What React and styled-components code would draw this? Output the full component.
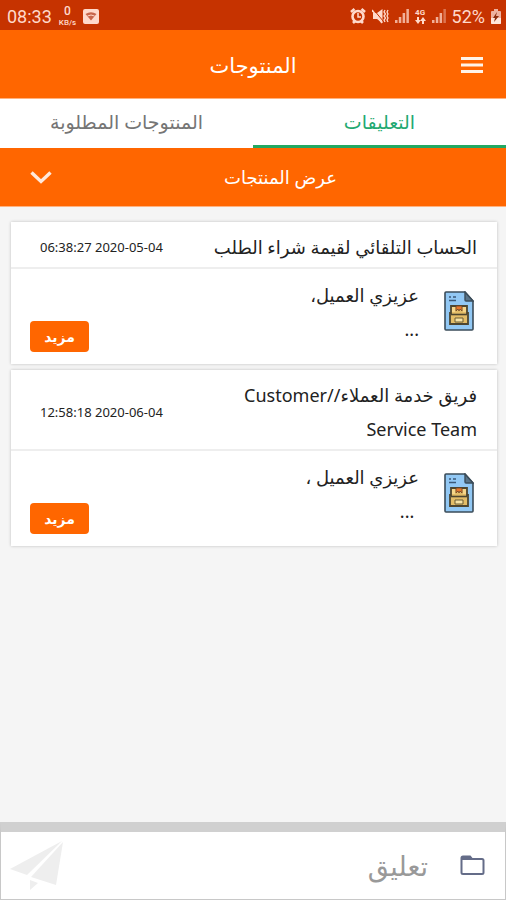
import React, { useState } from 'react';
import styled, { createGlobalStyle } from 'styled-components';

const GlobalStyle = createGlobalStyle`
  * {
    box-sizing: border-box;
  }
  body {
    margin: 0;
    background: #f5f5f5;
    color: #222;
    font-family: 'Noto Sans', 'DejaVu Sans', sans-serif;
  }
  button, input {
    font-family: inherit;
    border: none;
    padding: 0;
  }
  button {
    cursor: pointer;
  }
  svg {
    display: block;
    flex: none;
  }
`;

const Screen = styled.div`
  min-height: 100vh;
  display: flex;
  flex-direction: column;
`;

const StatusBar = styled.div`
  direction: ltr;
  display: flex;
  justify-content: space-between;
  align-items: center;
  height: 30px;
  padding: 2px 5px 0 7px;
  background: #c63300;
  color: #ffd9cb;
  font-family: Roboto, sans-serif;
  font-size: 18px;
`;

const StatusGroup = styled.div`
  display: flex;
  align-items: center;
  gap: ${props => props.$gap}px;
`;

const Speed = styled.div`
  display: flex;
  flex-direction: column;
  align-items: center;
  font-size: 12px;
  line-height: 14px;
  font-weight: 500;

  small {
    font-size: 8px;
    line-height: 10px;
  }
`;

const Network = styled(Speed)`
  font-size: 8px;
  line-height: 8px;
  font-weight: 700;
`;

const Header = styled.header`
  display: grid;
  grid-template-columns: 48px 1fr 48px;
  align-items: center;
  height: 69px;
  padding: 2px 10px 0;
  background: #ff6600;
  border-bottom: 1px solid #ffb27f;
  color: #fff;

  h1 {
    margin: 0;
    text-align: center;
    font-size: 21px;
    line-height: 30px;
    font-weight: 400;
  }
`;

const IconButton = styled.button`
  display: flex;
  align-items: center;
  justify-content: center;
  background: none;
`;

const Tabs = styled.nav`
  display: flex;
  height: 49px;
  background: #fff;
`;

const Tab = styled.button`
  flex: 1;
  background: none;
  border-bottom: 3px solid ${props => (props.$active ? '#22a962' : 'transparent')};
  color: ${props => (props.$active ? '#1fa971' : '#757575')};
  font-size: 19px;
`;

const Filter = styled.button`
  display: grid;
  grid-template-columns: 1fr 48px;
  align-items: center;
  justify-items: center;
  width: 100%;
  height: 59px;
  padding: 0 10px 0 17px;
  background: #ff6600;
  border-bottom: 1px solid #ffb27f;
  color: #fff;
  font-size: 18px;
`;

const List = styled.main`
  flex: 1;
  display: flex;
  flex-direction: column;
  gap: 6px;
  padding: 15px 9px 15px 11px;
`;

const Card = styled.article`
  background: #fff;
  box-shadow: 0 0 3px rgba(0, 0, 0, 0.22);
`;

const CardHeader = styled.div`
  display: flex;
  align-items: center;
  justify-content: space-between;
  padding: 8px 20px 3px 29px;
  border-bottom: 2px solid #eee;

  h2 {
    flex: 1;
    max-width: 272px;
    margin: 0;
    font-size: 18px;
    line-height: 34px;
    font-weight: 400;
  }

  time {
    direction: ltr;
    font-size: 13px;
    white-space: nowrap;
  }
`;

const CardBody = styled.div`
  display: flex;
  height: 95px;
  padding: 9px 21px 12px 19px;

  svg {
    margin: 13px 2px 0 25px;
  }
`;

const Message = styled.p`
  flex: 1;
  margin: 0;
  font-size: 18px;
  line-height: 34px;
  white-space: pre-wrap;
`;

const MoreButton = styled.button`
  align-self: flex-end;
  width: 59px;
  height: 31px;
  border-radius: 4px;
  background: #ff6600;
  color: #fff;
  font-size: 14px;
  font-weight: 700;
`;

const Composer = styled.form`
  display: flex;
  align-items: center;
  gap: 32px;
  height: 78px;
  padding: 0 20px 0 9px;
  border: 1px solid #c8c8c8;
  border-top: 10px solid #d0d0d0;
  background: #fff;

  input {
    flex: 1;
    min-width: 0;
    height: 48px;
    outline: none;
    background: none;
    color: #333;
    font-size: 27px;
  }

  input::placeholder {
    color: #999;
    opacity: 1;
  }
`;

const SavedIcon = () => (
  <svg width="16" height="15" viewBox="0 0 16 15">
    <rect width="16" height="15" rx="2" fill="#ffd9cb" />
    <path d="M2.500 5q5.500-3.500 11 0L8 11.500z" fill="#c8654a" />
    <path d="M4.500 7q3.500-2 7 0" fill="none" stroke="#ffd9cb" />
  </svg>
);

const AlarmIcon = () => (
  <svg width="16" height="16" viewBox="0 0 16 16" fill="none" stroke="#ffd9cb" strokeWidth="2.6">
    <circle cx="8" cy="8.5" r="5.500" />
    <path d="M1 4l3.500-3M15 4l-3.500-3M3 15l2-2M13 15l-2-2" />
    <path d="M8 5v4h3" strokeWidth="1.500" />
  </svg>
);

const MuteIcon = () => (
  <svg width="17" height="16" viewBox="0 0 17 16" fill="none" stroke="#ffd9cb">
    <path d="M1 5h4l5.500-4v14L5 11H1z" fill="#ffd9cb" stroke="none" />
    <path d="M1.500 1.500l10 12" stroke="#c63300" />
    <path d="M0 2l10 13" strokeWidth="1.500" />
    <path d="M13 2l-1 2 1.500 2L12 8l1.500 2-1.500 2 1 2M16 2l-1 2 1 2-1 2 1 2-1 2 1 2" strokeWidth="1.300" />
  </svg>
);

const SignalIcon = ({ level }) => (
  <svg width="14" height="14" viewBox="0 0 14 14" fill="#ffd9cb">
    {[3, 6, 10, 14].map((h, i) => (
      <rect key={h} x={i * 3.8} y={14 - h} width="2.5" height={h} opacity={i < level ? 0.75 : 0.4} />
    ))}
  </svg>
);

const ArrowsIcon = () => (
  <svg width="11" height="7" viewBox="0 0 11 7" fill="#ffd9cb">
    <path d="M2 0h2v3h2L3 7 0 3h2zM7 7h2V4h2L8 0 5 4h2z" />
  </svg>
);

const BatteryIcon = () => (
  <svg width="10" height="15" viewBox="0 0 10 15">
    <path d="M3 0h4v2h2q1 0 1 1v11q0 1-1 1H1q-1 0-1-1V3q0-1 1-1h2z" fill="#eeb29f" />
    <path d="M0 9h10v5q0 1-1 1H1q-1 0-1-1z" fill="#ffe6dc" />
    <path d="M6 3L2 9h2l-1 4 5-6H5z" fill="#8b2c0c" />
  </svg>
);

const MenuIcon = () => (
  <svg width="22" height="16" viewBox="0 0 22 16" fill="#fff3e8">
    <path d="M0 0h22v3H0zM0 6.500h22v3H0zM0 13h22v3H0z" />
  </svg>
);

const ChevronIcon = () => (
  <svg width="22" height="13" viewBox="0 0 22 13" fill="none" stroke="#ffe9dc" strokeWidth="3.400">
    <path d="M1.500 1.500L11 10.500l9.500-9" />
  </svg>
);

const DocumentIcon = () => (
  <svg width="30" height="40" viewBox="0 0 30 40">
    <path d="M2 1h19l8 9v28q0 1-1 1H2q-1 0-1-1V2q0-1 1-1z" fill="#92c8f4" stroke="#3b4c59" strokeWidth="1.600" />
    <path d="M21 1v8q0 1 1 1h7z" fill="#5a7488" stroke="#3b4c59" strokeWidth="1.400" />
    <path d="M5 6h2M9 6h3M5 9.500h7" stroke="#3c5878" strokeWidth="1.600" />
    <path d="M7 15h16v7h1v11H6V22h1z" fill="#e3bd68" stroke="#4e4630" strokeWidth="1.800" />
    <path d="M8 16h3v5H8zM19 16h3v5h-3z" fill="#f6d68a" />
    <path d="M12 15v5l2-2 1 2 1-2 2 2v-5z" fill="#e8772d" stroke="#6b4527" strokeWidth=".8" />
    <path d="M7 23.500h16" stroke="#4e4630" strokeWidth="1.600" />
    <path d="M11 27h8v4h-8z" fill="#f8e3a4" stroke="#6b5c34" />
  </svg>
);

const FolderIcon = () => (
  <svg width="25" height="21" viewBox="0 0 25 21" fill="none" stroke="#646c88" strokeWidth="2">
    <path d="M2.500 4H22q1.500 0 1.500 1.500v12q0 1.500-1.500 1.500H3q-1.500 0-1.500-1.500V3Q1.500 1.500 3 1.500h7L12 4z" />
    <path d="M2 3h9" strokeWidth="3" />
  </svg>
);

const SendIcon = () => (
  <svg width="54" height="50" viewBox="0 0 54 50" fill="#eee">
    <path d="M0 28L52 0 17 34z" />
    <path d="M53 1L46 44 21 36z" />
    <path d="M20 39l8 3-8 7z" />
  </svg>
);

const comments = [
  {
    id: 1,
    title: 'الحساب التلقائي لقيمة شراء الطلب',
    date: '06:38:27 2020-05-04',
    text: 'عزيزي العميل،\n...',
  },
  {
    id: 2,
    title: 'فريق خدمة العملاء//Customer Service Team',
    date: '12:58:18 2020-06-04',
    text: 'عزيزي العميل ،\n ...',
  },
];

const tabs = ['التعليقات', 'المنتوجات المطلوبة'];

const Comment = ({ title, date, text }) => (
  <Card>
    <CardHeader>
      <h2>{title}</h2>
      <time>{date}</time>
    </CardHeader>
    <CardBody>
      <DocumentIcon />
      <Message>{text}</Message>
      <MoreButton type="button">مزيد</MoreButton>
    </CardBody>
  </Card>
);

const App = () => {
  const [active, setActive] = useState(0);

  return (
    <Screen dir="rtl" lang="ar">
      <GlobalStyle />
      <StatusBar>
        <StatusGroup $gap={7}>
          <span>08:33</span>
          <Speed>
            <span>0</span>
            <small>KB/s</small>
          </Speed>
          <SavedIcon />
        </StatusGroup>
        <StatusGroup $gap={6}>
          <AlarmIcon />
          <MuteIcon />
          <SignalIcon level={4} />
          <Network>
            4G
            <ArrowsIcon />
          </Network>
          <SignalIcon level={3} />
          <span>52%</span>
          <BatteryIcon />
        </StatusGroup>
      </StatusBar>
      <Header>
        <IconButton type="button" aria-label="القائمة">
          <MenuIcon />
        </IconButton>
        <h1>المنتوجات</h1>
      </Header>
      <Tabs>
        {tabs.map((tab, i) => (
          <Tab key={tab} type="button" $active={i === active} onClick={() => setActive(i)}>
            {tab}
          </Tab>
        ))}
      </Tabs>
      <Filter type="button">
        <span>عرض المنتجات</span>
        <ChevronIcon />
      </Filter>
      <List>
        {comments.map(comment => (
          <Comment key={comment.id} {...comment} />
        ))}
      </List>
      <Composer onSubmit={e => e.preventDefault()}>
        <IconButton type="button" aria-label="إرفاق ملف">
          <FolderIcon />
        </IconButton>
        <input type="text" placeholder="تعليق" aria-label="تعليق" />
        <IconButton type="submit" aria-label="إرسال">
          <SendIcon />
        </IconButton>
      </Composer>
    </Screen>
  );
};

export default App;
